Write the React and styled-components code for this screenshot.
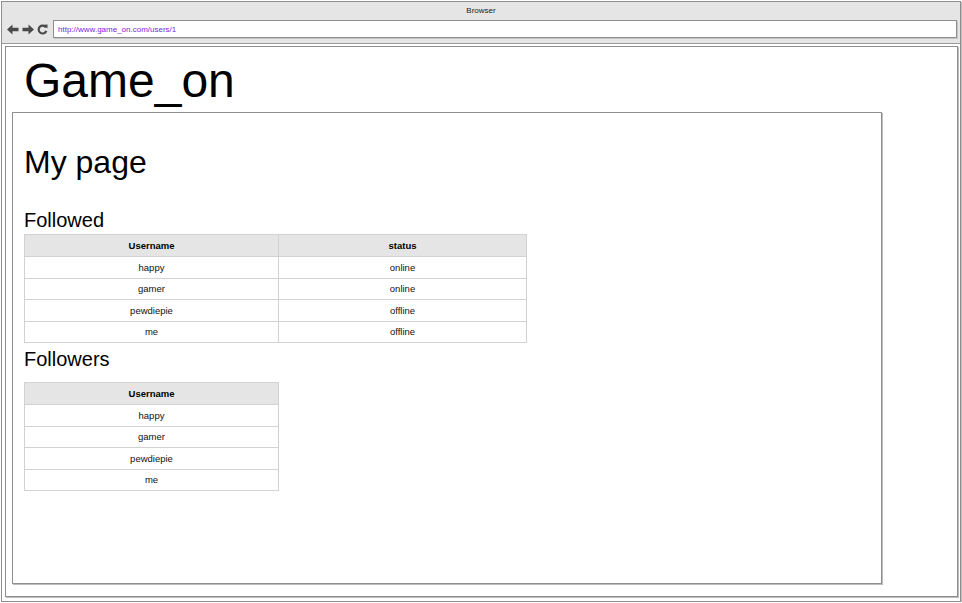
import styled, { createGlobalStyle } from "styled-components";

const GlobalStyle = createGlobalStyle`
  html, body {
    margin: 0;
    padding: 0;
    background: #ffffff;
    font-family: "Liberation Sans", Arial, sans-serif;
    color: #000;
  }
`;

const followed = [
  { name: "happy", status: "online" },
  { name: "gamer", status: "online" },
  { name: "pewdiepie", status: "offline" },
  { name: "me", status: "offline" },
];

const followers = ["happy", "gamer", "pewdiepie", "me"];

const Window = styled.div`
  margin: 1px 0 0 1px;
  width: 958px;
  height: 599px;
  border: 1px solid #8e8e8e;
  box-shadow: 1px 1px 0 #bdbdbd;
  background: #e5e5e5;
  display: flex;
  flex-direction: column;
`;

const TitleBar = styled.div`
  height: 17px;
  display: flex;
  align-items: center;
  justify-content: center;
  font-size: 8px;
  color: #222;
`;

const Toolbar = styled.div`
  height: 23px;
  display: flex;
  align-items: flex-start;
  padding: 1px 3px 0 5px;
  gap: 2px;
  border-bottom: 1px solid #9a9a9a;
`;

const NavIcons = styled.div`
  display: flex;
  align-items: center;
  gap: 3px;
  height: 18px;
  padding-right: 3px;
`;

const UrlBox = styled.div`
  flex: 1;
  height: 16px;
  background: #fff;
  border: 1px solid #8e8e8e;
  box-shadow: 1px 1px 0 #c6c6c6;
  display: flex;
  align-items: center;
  padding-left: 4px;
  font-size: 8px;
  color: #7f1ee0;
`;

const Viewport = styled.div`
  flex: 1;
  background: #fff;
  padding: 2px 2px 4px 3px;
  display: flex;
`;

const Page = styled.div`
  flex: 1;
  border: 1px solid #8e8e8e;
  box-shadow: 1px 1px 0 #bdbdbd;
  padding: 0 75px 12px 6px;
  display: flex;
  flex-direction: column;
`;

const Logo = styled.h1`
  margin: 6px 0 0 12px;
  font-size: 48px;
  font-weight: normal;
  line-height: 56px;
  height: 59px;
`;

const Panel = styled.div`
  flex: 1;
  border: 1px solid #8e8e8e;
  box-shadow: 1px 1px 0 #bdbdbd;
  padding: 0 11px;
`;

const Heading = styled.h2`
  margin: 30px 0 0 0;
  font-size: 32px;
  font-weight: normal;
  line-height: 38px;
`;

const SubHeading = styled.h3`
  margin: ${(p) => p.$top}px 0 ${(p) => p.$bottom}px 0;
  font-size: 20px;
  font-weight: normal;
  line-height: 23px;
`;

const Table = styled.table`
  width: ${(p) => p.$width}px;
  border-collapse: collapse;
  font-size: 9.5px;
`;

const Th = styled.th`
  height: 21px;
  padding: 0;
  background: #e5e5e5;
  border: 1px solid #d2d2d2;
  font-weight: bold;
  text-align: center;
`;

const Td = styled.td`
  height: 20.5px;
  padding: 0;
  border: 1px solid #d2d2d2;
  text-align: center;
  color: #111;
`;

const Arrow = ({ flip }) => (
  <svg width="12" height="11" viewBox="0 0 12 11" style={{ transform: flip ? "scaleX(-1)" : "none" }}>
    <path d="M0 5.5 L5.5 0.5 L5.5 3.7 L11.5 3.7 L11.5 7.3 L5.5 7.3 L5.5 10.5 Z" fill="#4a4a4a" />
  </svg>
);

const Reload = () => (
  <svg width="11" height="11" viewBox="0 0 11 11">
    <path d="M8.9 3.5 A3.9 3.9 0 1 0 9.3 6.8" fill="none" stroke="#4a4a4a" strokeWidth="2.2" />
    <path d="M6.6 0.7 L10.6 0.5 L10.4 4.6 Z" fill="#4a4a4a" />
  </svg>
);

export default function App() {
  return (
    <>
      <GlobalStyle />
      <Window>
        <TitleBar>Browser</TitleBar>
        <Toolbar>
          <NavIcons>
            <Arrow />
            <Arrow flip />
            <Reload />
          </NavIcons>
          <UrlBox>http://www.game_on.com/users/1</UrlBox>
        </Toolbar>
        <Viewport>
          <Page>
            <Logo>Game_on</Logo>
            <Panel>
              <Heading>My page</Heading>
              <SubHeading $top={28} $bottom={2}>Followed</SubHeading>
              <Table $width={503}>
                <thead>
                  <tr>
                    <Th style={{ width: 253 }}>Username</Th>
                    <Th>status</Th>
                  </tr>
                </thead>
                <tbody>
                  {followed.map((u) => (
                    <tr key={u.name}>
                      <Td>{u.name}</Td>
                      <Td>{u.status}</Td>
                    </tr>
                  ))}
                </tbody>
              </Table>
              <SubHeading $top={5} $bottom={11}>Followers</SubHeading>
              <Table $width={255}>
                <thead>
                  <tr>
                    <Th>Username</Th>
                  </tr>
                </thead>
                <tbody>
                  {followers.map((n) => (
                    <tr key={n}>
                      <Td>{n}</Td>
                    </tr>
                  ))}
                </tbody>
              </Table>
            </Panel>
          </Page>
        </Viewport>
      </Window>
    </>
  );
}
